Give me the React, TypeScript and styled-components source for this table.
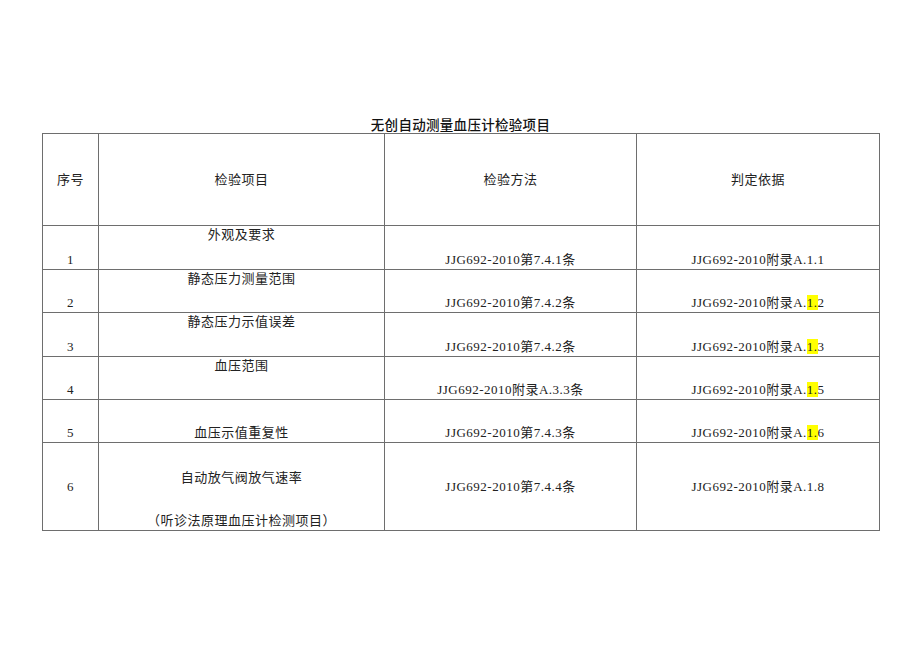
import React from "react";
import styled, { createGlobalStyle } from "styled-components";

const GlobalStyle = createGlobalStyle`
  html, body {
    margin: 0;
    padding: 0;
    background: #ffffff;
  }
`;

type Align = "top" | "middle" | "bottom";

interface Row {
  no: string;
  item: string;
  method: string;
  basis: string;
  mark?: string;
  tail?: string;
  height: number;
  itemAlign: Align;
  align: Align;
}

const rows: Row[] = [
  { no: "1", item: "外观及要求", method: "JJG692-2010第7.4.1条", basis: "JJG692-2010附录A.1.1", height: 44, itemAlign: "top", align: "bottom" },
  { no: "2", item: "静态压力测量范围", method: "JJG692-2010第7.4.2条", basis: "JJG692-2010附录A.", mark: "1.", tail: "2", height: 43, itemAlign: "top", align: "bottom" },
  { no: "3", item: "静态压力示值误差", method: "JJG692-2010第7.4.2条", basis: "JJG692-2010附录A.", mark: "1.", tail: "3", height: 44, itemAlign: "top", align: "bottom" },
  { no: "4", item: "血压范围", method: "JJG692-2010附录A.3.3条", basis: "JJG692-2010附录A.", mark: "1.", tail: "5", height: 43, itemAlign: "top", align: "bottom" },
  { no: "5", item: "血压示值重复性", method: "JJG692-2010第7.4.3条", basis: "JJG692-2010附录A.", mark: "1.", tail: "6", height: 43, itemAlign: "bottom", align: "bottom" },
];

const App = () => {
  return (
    <Page>
      <GlobalStyle />
      <Title>无创自动测量血压计检验项目</Title>
      <Table>
        <colgroup>
          <col style={{ width: 56 }} />
          <col style={{ width: 286 }} />
          <col style={{ width: 252 }} />
          <col style={{ width: 243 }} />
        </colgroup>
        <tbody>
          <HeadRow>
            <Cell $align="middle">序号</Cell>
            <Cell $align="middle">检验项目</Cell>
            <Cell $align="middle">检验方法</Cell>
            <Cell $align="middle">判定依据</Cell>
          </HeadRow>
          {rows.map((r) => (
            <BodyRow key={r.no} $h={r.height}>
              <Cell $align={r.align}>{r.no}</Cell>
              <Cell $align={r.itemAlign}>{r.item}</Cell>
              <Cell $align={r.align}>{r.method}</Cell>
              <Cell $align={r.align}>
                {r.basis}
                {r.mark && <Mark>{r.mark}</Mark>}
                {r.tail}
              </Cell>
            </BodyRow>
          ))}
          <BodyRow $h={87}>
            <Cell $align="middle">6</Cell>
            <Cell $align="top">
              <ItemStack>
                <span>自动放气阀放气速率</span>
                <span>（听诊法原理血压计检测项目）</span>
              </ItemStack>
            </Cell>
            <Cell $align="middle">JJG692-2010第7.4.4条</Cell>
            <Cell $align="middle">JJG692-2010附录A.1.8</Cell>
          </BodyRow>
        </tbody>
      </Table>
    </Page>
  );
};

const Page = styled.div`
  width: 920px;
  height: 651px;
  box-sizing: border-box;
  padding: 116px 0 0 42px;
  font-family: "Liberation Serif", "Noto Sans CJK SC", serif;
  color: #1a1a1a;
`;

const Title = styled.div`
  width: 837px;
  text-align: center;
  font-family: "Noto Sans CJK SC", sans-serif;
  font-size: 13.5px;
  font-weight: 500;
  line-height: 17px;
  letter-spacing: 0.3px;
  color: #111;
`;

const Table = styled.table`
  width: 838px;
  border-collapse: collapse;
  table-layout: fixed;
`;

const HeadRow = styled.tr`
  height: 92px;
`;

const BodyRow = styled.tr<{ $h: number }>`
  height: ${({ $h }) => $h}px;
`;

const Cell = styled.td<{ $align: Align }>`
  border: 1px solid #6e6e6e;
  padding: ${({ $align }) => ($align === "top" ? "1px 0 0" : $align === "bottom" ? "0 0 1px" : "0")};
  text-align: center;
  vertical-align: ${({ $align }) => $align};
  font-size: 13px;
  line-height: 16px;
  letter-spacing: 0.5px;
  white-space: nowrap;
  color: #222;
`;

const ItemStack = styled.div`
  height: 86px;
  display: flex;
  flex-direction: column;
  justify-content: space-between;
  align-items: center;
  padding: 26px 0 1px;
  box-sizing: border-box;
`;

const Mark = styled.span`
  background: #ffff00;
`;

export default App;
